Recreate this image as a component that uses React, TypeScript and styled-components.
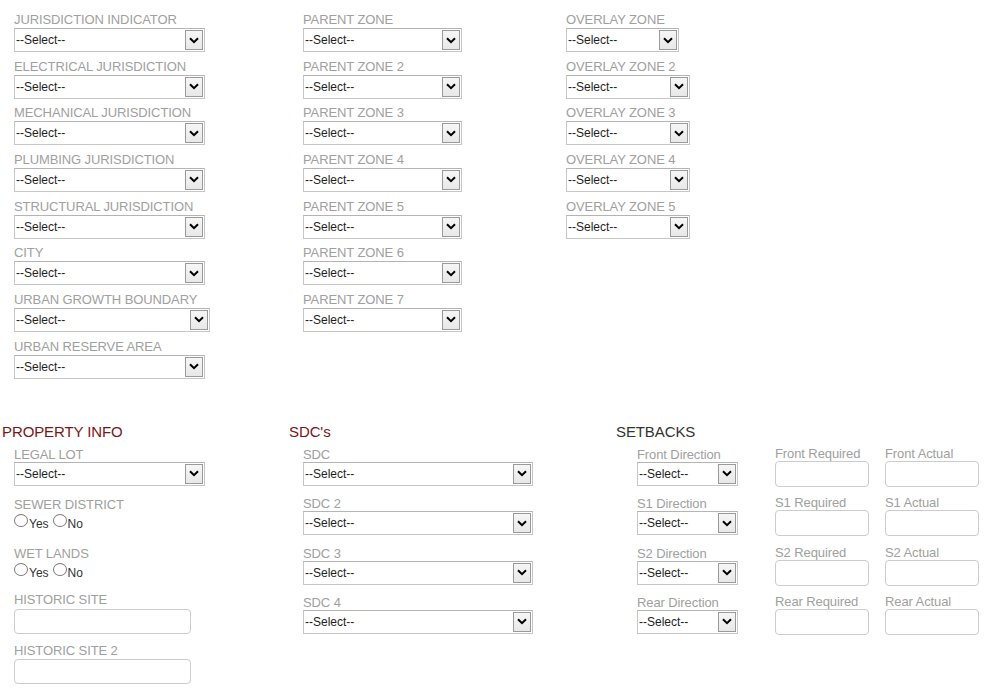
import React from "react";
import styled, { createGlobalStyle } from "styled-components";

const GlobalStyle = createGlobalStyle`
  html, body {
    margin: 0;
    padding: 0;
    background: #ffffff;
    font-family: "Liberation Sans", Arial, Helvetica, sans-serif;
  }
`;

const Page = styled.div`
  width: 989px;
  padding-top: 12px;
`;

const TopSection = styled.div`
  display: grid;
  grid-template-columns: 289px 263px 1fr;
  padding-left: 14px;
  align-items: start;
`;

const Column = styled.div`
  display: flex;
  flex-direction: column;
`;

const Field = styled.div<{ $gap?: number }>`
  display: flex;
  flex-direction: column;
  align-items: flex-start;
  margin-bottom: ${(p) => p.$gap ?? 0}px;
`;

const Label = styled.label`
  display: block;
  font-size: 13px;
  line-height: 15px;
  letter-spacing: -0.1px;
  color: #a0a0a0;
  white-space: nowrap;
`;

const SelectBox = styled.div<{ $w: number; $h?: number; $mt?: number }>`
  box-sizing: border-box;
  width: ${(p) => p.$w}px;
  height: ${(p) => p.$h ?? 24}px;
  margin-top: ${(p) => p.$mt ?? 1}px;
  border: 1px solid #c6c6c6;
  border-top-color: #b4b4b4;
  background: #ffffff;
  display: flex;
  align-items: stretch;
`;

const SelectText = styled.span`
  flex: 1;
  display: flex;
  align-items: center;
  padding-left: 1px;
  font-size: 12px;
  color: #1e1e1e;
  white-space: nowrap;
`;

const ArrowButton = styled.span`
  box-sizing: border-box;
  width: 18px;
  margin: 1px;
  border: 1px solid #9a9a9a;
  background: linear-gradient(#f6f6f6, #e8e8e8);
  display: flex;
  align-items: center;
  justify-content: center;
`;

const TextBox = styled.div<{ $w: number; $h?: number; $mt?: number }>`
  box-sizing: border-box;
  width: ${(p) => p.$w}px;
  height: ${(p) => p.$h ?? 26}px;
  margin-top: ${(p) => p.$mt ?? 0}px;
  border: 1px solid #cccccc;
  border-radius: 4px;
  background: #ffffff;
`;

const BottomSection = styled.div`
  display: grid;
  grid-template-columns: 287px 327px 1fr;
  padding-left: 2px;
  margin-top: 38px;
  align-items: start;
`;

const SectionHeader = styled.div<{ $dark?: boolean }>`
  font-size: 15px;
  line-height: 17px;
  letter-spacing: -0.1px;
  color: ${(p) => (p.$dark ? "#333333" : "#7a1517")};
  white-space: nowrap;
`;

const SectionBody = styled.div<{ $indent: number; $mt: number }>`
  display: flex;
  flex-direction: column;
  padding-left: ${(p) => p.$indent}px;
  margin-top: ${(p) => p.$mt}px;
`;

const RadioRow = styled.div<{ $mb: number }>`
  display: flex;
  align-items: flex-start;
  height: 18px;
  margin-bottom: ${(p) => p.$mb}px;
`;

const RadioCircle = styled.span<{ $ml?: number }>`
  box-sizing: border-box;
  display: block;
  width: 14px;
  height: 13px;
  margin-top: 2px;
  margin-left: ${(p) => p.$ml ?? 0}px;
  border: 1px solid #7a7a7a;
  border-radius: 50%;
  background: #ffffff;
`;

const RadioText = styled.span`
  font-size: 12px;
  line-height: 14px;
  margin-top: 5px;
  margin-left: 1px;
  color: #333333;
`;

const SetbackGrid = styled.div`
  display: grid;
  grid-template-columns: 138px 110px 1fr;
  row-gap: 8.33px;
`;

const SetbackCell = styled.div<{ $pt?: number }>`
  display: flex;
  flex-direction: column;
  align-items: flex-start;
  padding-top: ${(p) => p.$pt ?? 0}px;
`;

const Chevron = () => (
  <svg width="10" height="7" viewBox="0 0 10 7" aria-hidden="true">
    <path d="M1 1.2 L5 5.2 L9 1.2" fill="none" stroke="#000" strokeWidth="2" />
  </svg>
);

const Select = ({ w, h, mt }: { w: number; h?: number; mt?: number }) => (
  <SelectBox $w={w} $h={h} $mt={mt}>
    <SelectText>--Select--</SelectText>
    <ArrowButton>
      <Chevron />
    </ArrowButton>
  </SelectBox>
);

const PITCH_GAP = 6.67;

const SelectField = ({ label, w }: { label: string; w: number }) => (
  <Field $gap={PITCH_GAP}>
    <Label>{label}</Label>
    <Select w={w} />
  </Field>
);

const col1 = [
  { label: "JURISDICTION INDICATOR", w: 191 },
  { label: "ELECTRICAL JURISDICTION", w: 191 },
  { label: "MECHANICAL JURISDICTION", w: 191 },
  { label: "PLUMBING JURISDICTION", w: 191 },
  { label: "STRUCTURAL JURISDICTION", w: 191 },
  { label: "CITY", w: 191 },
  { label: "URBAN GROWTH BOUNDARY", w: 196 },
  { label: "URBAN RESERVE AREA", w: 191 },
];

const col2 = [
  "PARENT ZONE",
  "PARENT ZONE 2",
  "PARENT ZONE 3",
  "PARENT ZONE 4",
  "PARENT ZONE 5",
  "PARENT ZONE 6",
  "PARENT ZONE 7",
];

const col3 = [
  { label: "OVERLAY ZONE", w: 113 },
  { label: "OVERLAY ZONE 2", w: 124 },
  { label: "OVERLAY ZONE 3", w: 124 },
  { label: "OVERLAY ZONE 4", w: 124 },
  { label: "OVERLAY ZONE 5", w: 124 },
];

const setbacks = ["Front", "S1", "S2", "Rear"];

const YesNo = ({ mb }: { mb: number }) => (
  <RadioRow $mb={mb}>
    <RadioCircle />
    <RadioText>Yes</RadioText>
    <RadioCircle $ml={4} />
    <RadioText>No</RadioText>
  </RadioRow>
);

export default function App() {
  return (
    <Page>
      <GlobalStyle />
      <TopSection>
        <Column>
          {col1.map((f) => (
            <SelectField key={f.label} label={f.label} w={f.w} />
          ))}
        </Column>
        <Column>
          {col2.map((l) => (
            <SelectField key={l} label={l} w={159} />
          ))}
        </Column>
        <Column>
          {col3.map((f) => (
            <SelectField key={f.label} label={f.label} w={f.w} />
          ))}
        </Column>
      </TopSection>

      <BottomSection>
        <Column>
          <SectionHeader>PROPERTY INFO</SectionHeader>
          <SectionBody $indent={12} $mt={6.7}>
            <Field $gap={11}>
              <Label>LEGAL LOT</Label>
              <Select w={191} mt={0} />
            </Field>
            <Field>
              <Label>SEWER DISTRICT</Label>
              <YesNo mb={16} />
            </Field>
            <Field>
              <Label>WET LANDS</Label>
              <YesNo mb={13} />
            </Field>
            <Field $gap={9}>
              <Label>HISTORIC SITE</Label>
              <TextBox $w={177} $h={25} $mt={2} />
            </Field>
            <Field>
              <Label>HISTORIC SITE 2</Label>
              <TextBox $w={177} $h={25} $mt={1} />
            </Field>
          </SectionBody>
        </Column>

        <Column>
          <SectionHeader>SDC's</SectionHeader>
          <SectionBody $indent={14} $mt={6.7}>
            {["SDC", "SDC 2", "SDC 3", "SDC 4"].map((l) => (
              <Field key={l} $gap={10.33}>
                <Label>{l}</Label>
                <Select w={230} mt={0} />
              </Field>
            ))}
          </SectionBody>
        </Column>

        <Column>
          <SectionHeader $dark>SETBACKS</SectionHeader>
          <SectionBody $indent={21} $mt={5.7}>
            <SetbackGrid>
              {setbacks.map((s) => (
                <React.Fragment key={s}>
                  <SetbackCell $pt={1}>
                    <Label>{s} Direction</Label>
                    <Select w={101} h={24} mt={0} />
                  </SetbackCell>
                  <SetbackCell>
                    <Label>{s} Required</Label>
                    <TextBox $w={94} />
                  </SetbackCell>
                  <SetbackCell>
                    <Label>{s} Actual</Label>
                    <TextBox $w={94} />
                  </SetbackCell>
                </React.Fragment>
              ))}
            </SetbackGrid>
          </SectionBody>
        </Column>
      </BottomSection>
    </Page>
  );
}
